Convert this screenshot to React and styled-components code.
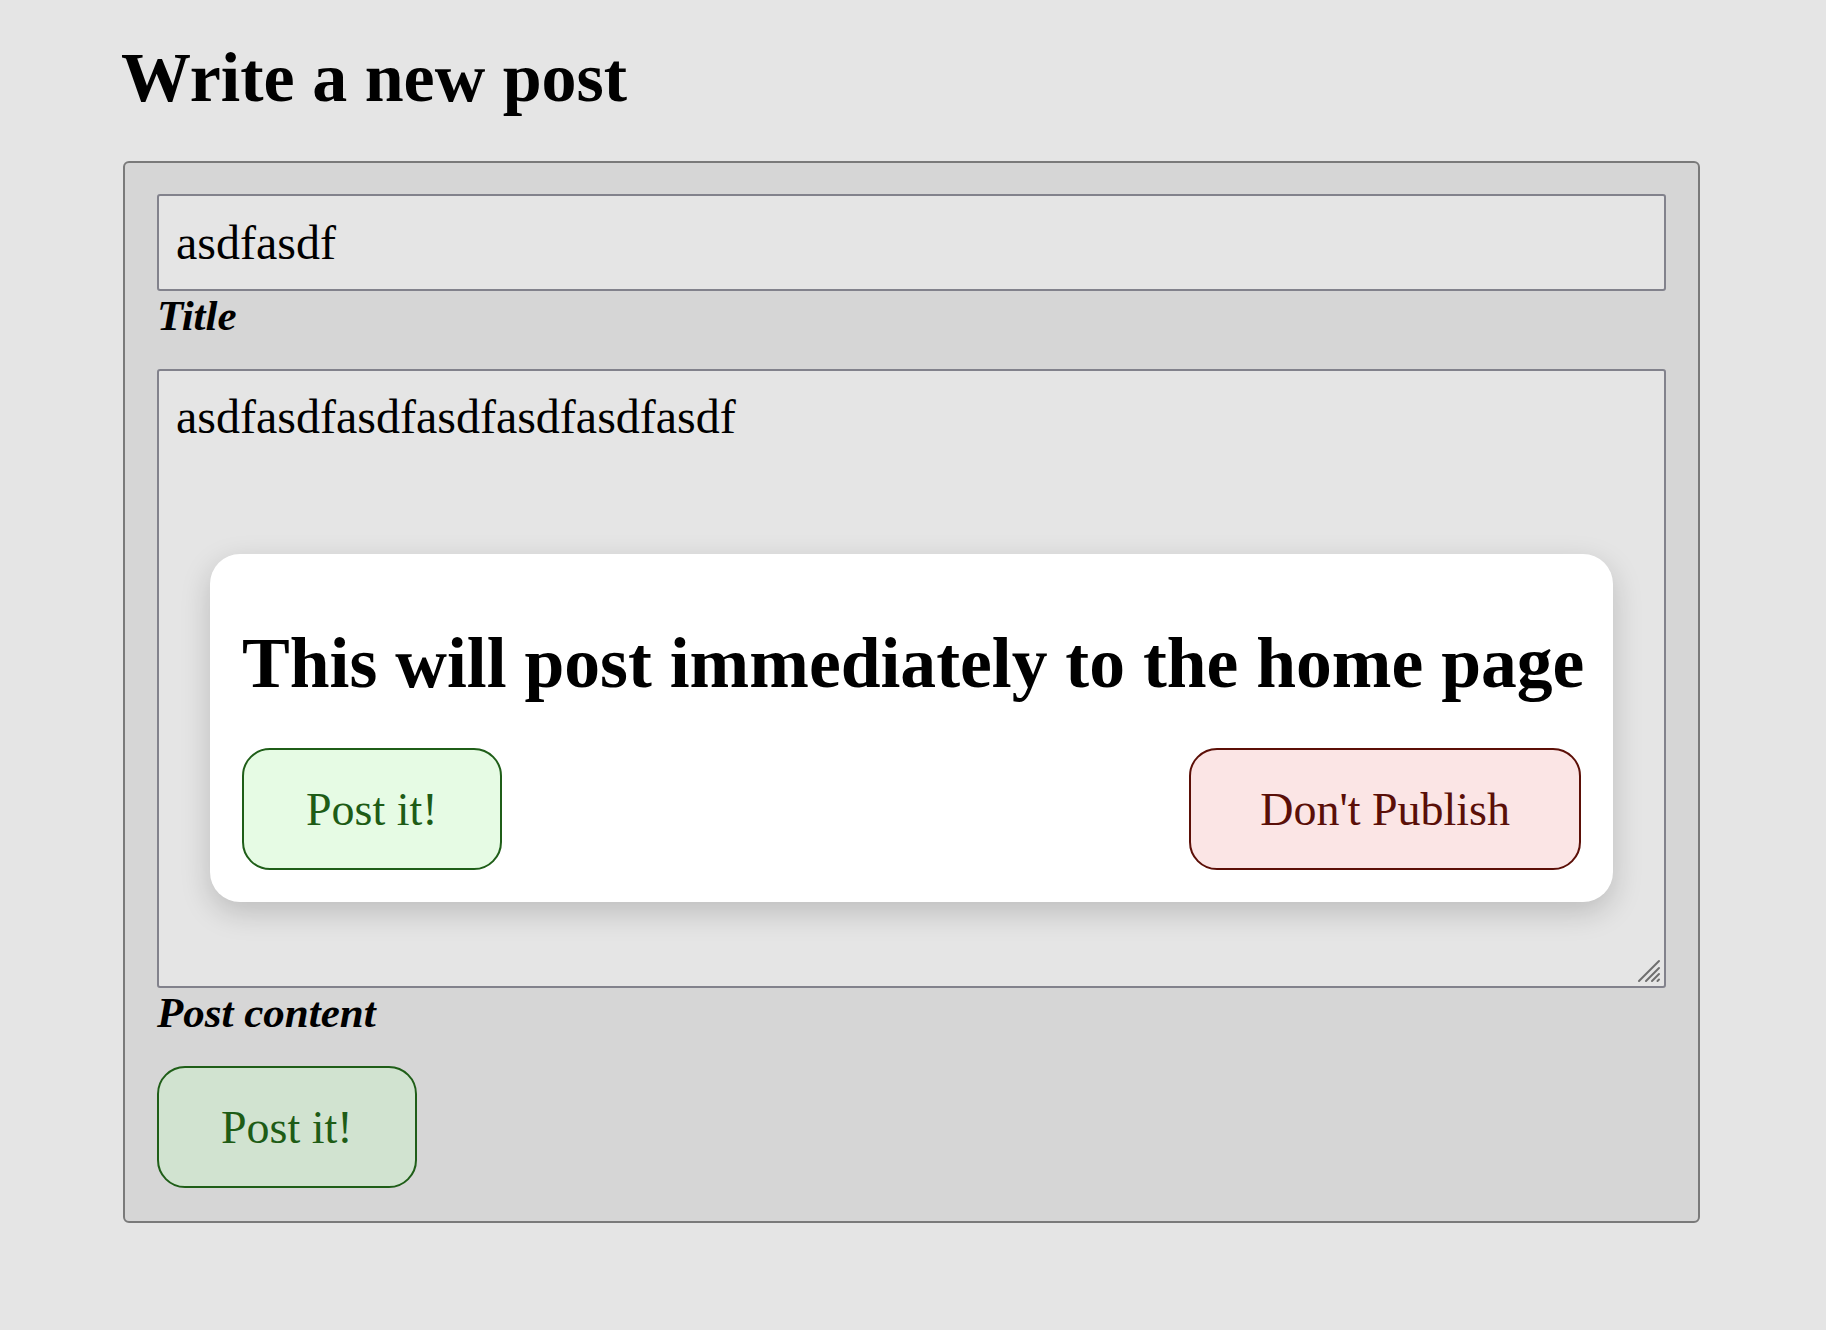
import styled, { createGlobalStyle } from "styled-components";

const GlobalStyle = createGlobalStyle`
  html, body {
    margin: 0;
    padding: 0;
    background: #e5e5e5;
    font-family: "Liberation Serif", "Times New Roman", serif;
    color: #000;
  }
`;

const Page = styled.main`
  padding: 38px 0 80px 121px;
`;

const Heading = styled.h1`
  margin: 0 0 43px 0;
  font-size: 70px;
  line-height: 80px;
  font-weight: 700;
`;

const Form = styled.form`
  width: 1577px;
  box-sizing: border-box;
  margin-left: 2px;
  padding: 31px 32px 33px 32px;
  background: #d6d6d6;
  border: 2px solid #7a7a7a;
  border-radius: 6px;
  display: flex;
  flex-direction: column;
  align-items: flex-start;
`;

const Field = styled.div`
  display: flex;
  flex-direction: column;
  width: 100%;
  margin-bottom: ${({ $gap }) => $gap}px;
  position: relative;
`;

const TextInput = styled.input`
  box-sizing: border-box;
  width: 100%;
  height: 97px;
  padding: 0 17px;
  font-family: inherit;
  font-size: 48px;
  color: #000;
  background: #e5e5e5;
  border: 2px solid #82828c;
  border-radius: 3px;
  outline: none;
`;

const AreaBox = styled.div`
  position: relative;
  width: 100%;
`;

const TextArea = styled.textarea`
  display: block;
  box-sizing: border-box;
  width: 100%;
  height: 619px;
  padding: 18px 17px;
  font-family: inherit;
  font-size: 48px;
  line-height: 55px;
  color: #000;
  background: #e5e5e5;
  border: 2px solid #82828c;
  border-radius: 3px;
  outline: none;
  resize: none;
`;

const Grip = styled.svg`
  position: absolute;
  right: 4px;
  bottom: 4px;
  width: 26px;
  height: 26px;
  pointer-events: none;
`;

const Label = styled.label`
  font-size: 43px;
  line-height: 49px;
  font-weight: 700;
  font-style: italic;
`;

const Button = styled.button`
  box-sizing: border-box;
  height: 122px;
  padding: 0 ${({ $pad }) => $pad || 63}px;
  font-family: inherit;
  font-size: 46px;
  border-radius: 28px;
  border: 2px solid ${({ $variant }) => ($variant === "danger" ? "#5c0f07" : "#1f5e18")};
  color: ${({ $variant }) => ($variant === "danger" ? "#5a0f08" : "#1e5c16")};
  background: ${({ $variant }) =>
    $variant === "danger" ? "#fbe5e5" : $variant === "light" ? "#e6fbe4" : "#d1e3d0"};
  cursor: pointer;
`;

const Dialog = styled.div`
  position: absolute;
  top: 185px;
  left: 53px;
  right: 53px;
  box-sizing: border-box;
  height: 348px;
  padding: 0 32px 32px;
  background: #fff;
  border-radius: 30px;
  box-shadow: 0 10px 30px rgba(0, 0, 0, 0.18);
  display: flex;
  flex-direction: column;
`;

const DialogTitle = styled.h2`
  margin: 69px 0 45px 0;
  font-size: 71.6px;
  line-height: 80px;
  font-weight: 700;
  white-space: nowrap;
`;

const DialogActions = styled.div`
  display: flex;
  justify-content: space-between;
  align-items: center;
`;

export default function App() {
  return (
    <>
      <GlobalStyle />
      <Page>
        <Heading>Write a new post</Heading>
        <Form onSubmit={(e) => e.preventDefault()}>
          <Field $gap={29}>
            <TextInput id="title" defaultValue="asdfasdf" />
            <Label htmlFor="title">Title</Label>
          </Field>
          <Field $gap={29}>
            <AreaBox>
              <TextArea id="content" defaultValue="asdfasdfasdfasdfasdfasdfasdf" />
              <Grip viewBox="0 0 26 26">
                <g stroke="#6e6e6e" strokeWidth="2" strokeLinecap="round">
                  <line x1="3" y1="23" x2="23" y2="3" />
                  <line x1="10" y1="23" x2="23" y2="10" />
                  <line x1="16" y1="23" x2="23" y2="16" />
                  <line x1="21.5" y1="23" x2="23" y2="21.5" />
                </g>
              </Grip>
            </AreaBox>
            <Label htmlFor="content">Post content</Label>
            <Dialog role="dialog">
              <DialogTitle>This will post immediately to the home page</DialogTitle>
              <DialogActions>
                <Button type="button" $variant="light" $pad={62}>Post it!</Button>
                <Button type="button" $variant="danger" $pad={69}>Don't Publish</Button>
              </DialogActions>
            </Dialog>
          </Field>
          <Button type="submit" $pad={62}>Post it!</Button>
        </Form>
      </Page>
    </>
  );
}
